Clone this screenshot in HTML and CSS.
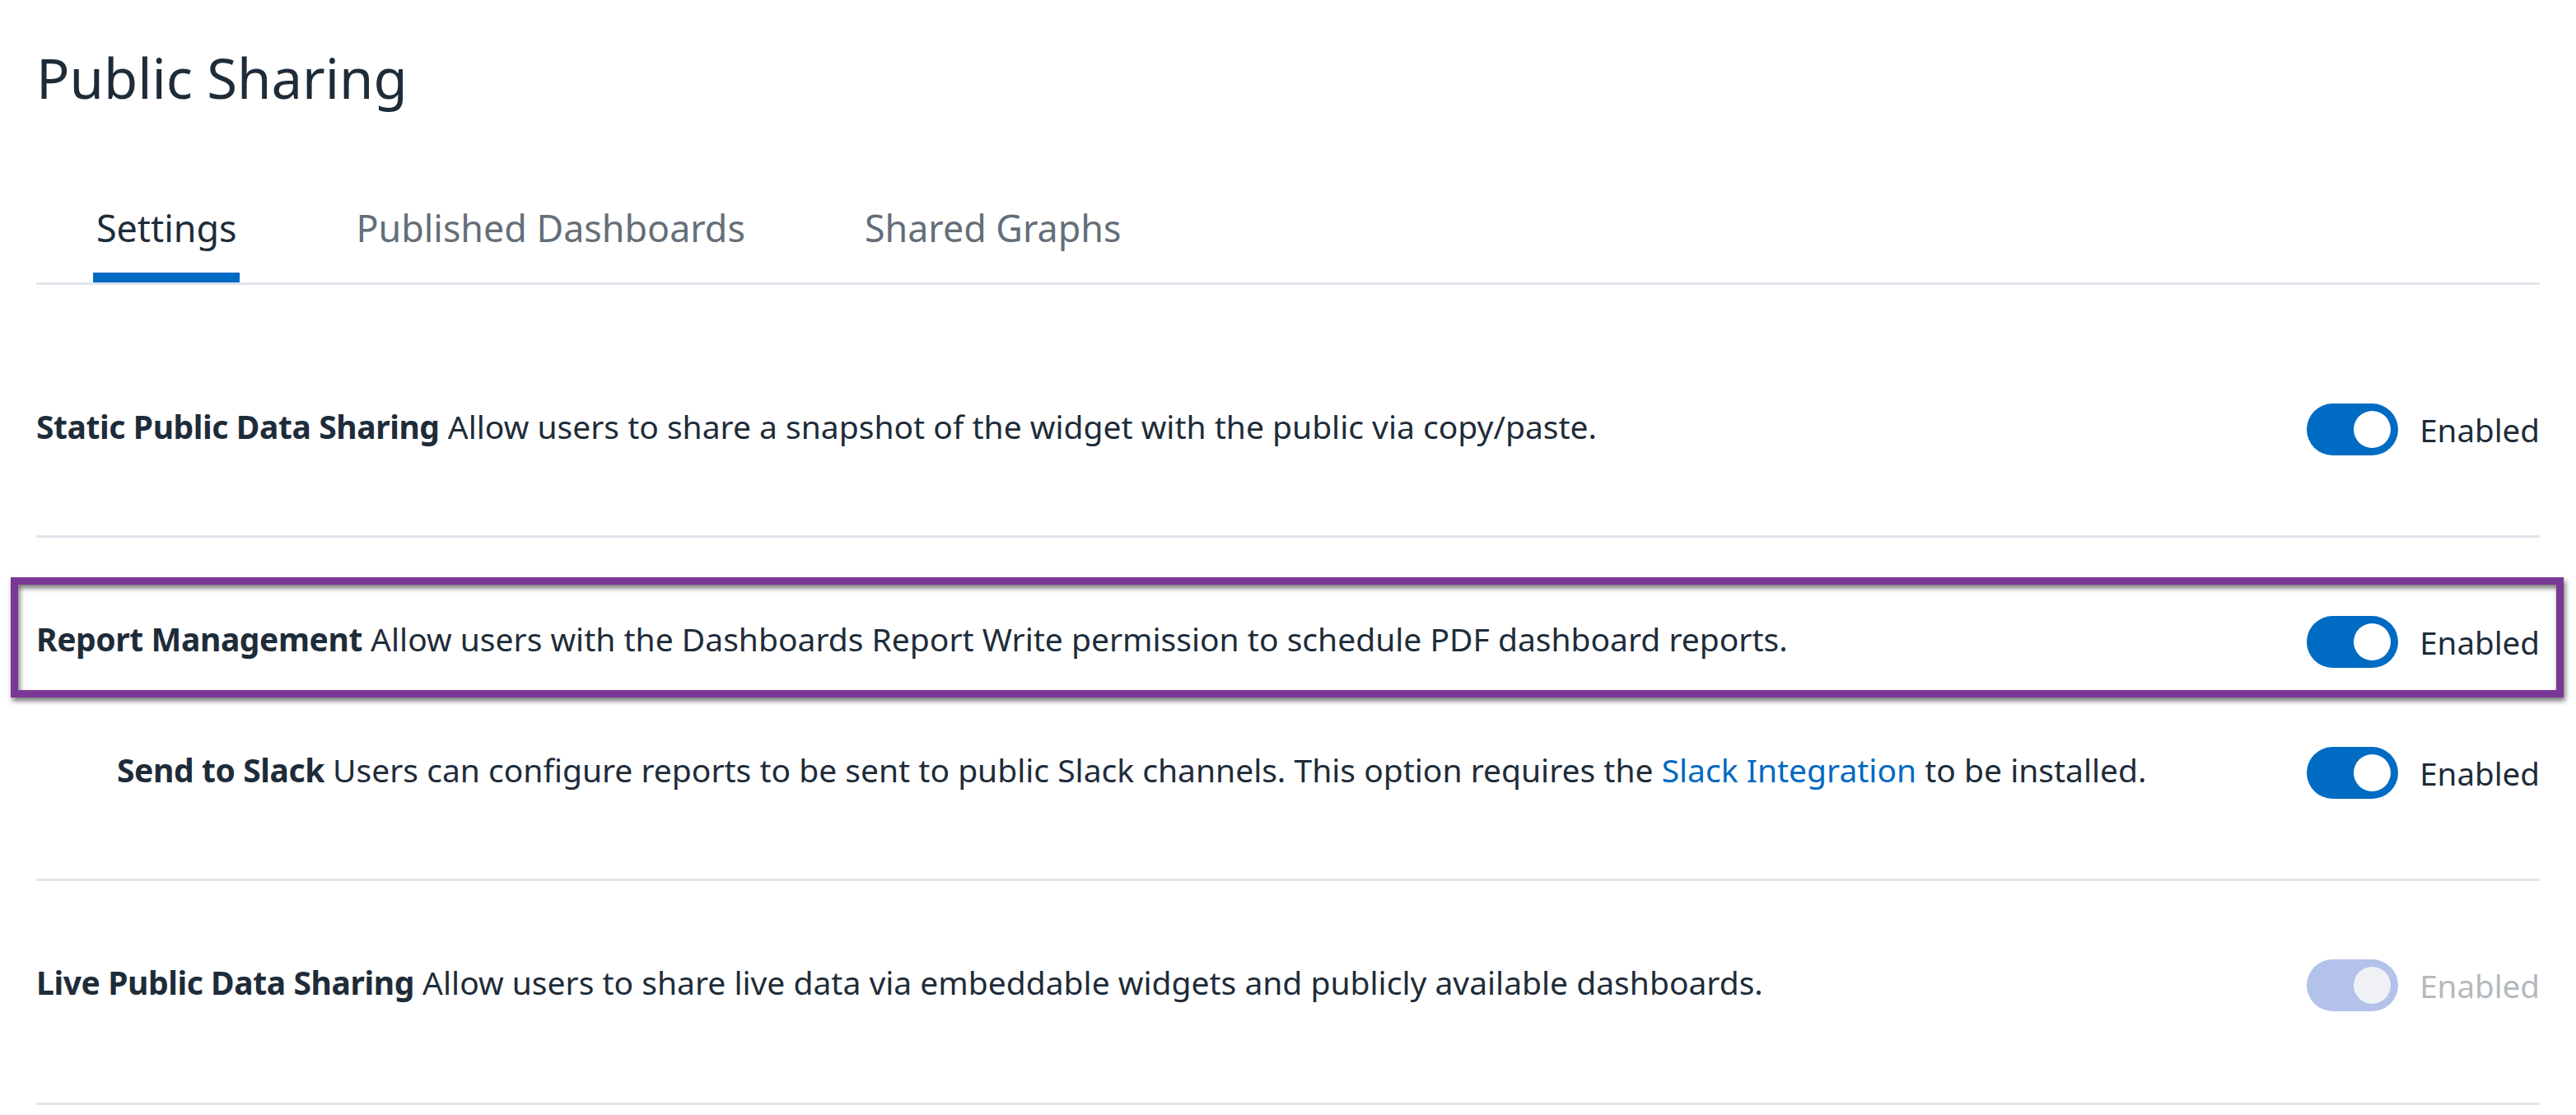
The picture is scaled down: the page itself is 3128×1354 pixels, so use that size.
FILE: index.html
```html
<!DOCTYPE html>
<html lang="en">
<head>
<meta charset="utf-8">
<title>Public Sharing</title>
<link rel="stylesheet" href="styles.css">
</head>
<body>
<main class="page">
  <h1 class="title">Public Sharing</h1>
  <nav class="tabs">
    <a class="tab tab-active">Settings</a>
    <a class="tab">Published Dashboards</a>
    <a class="tab">Shared Graphs</a>
  </nav>
  <div class="settings">
    <section class="section section-first">
      <div class="row">
        <p class="desc"><strong>Static Public Data Sharing</strong> Allow users to share a snapshot of the widget with the public via copy/paste.</p>
        <div class="control">
          <span class="toggle"><span class="knob"></span></span>
          <span class="state">Enabled</span>
        </div>
      </div>
    </section>
    <section class="section">
      <div class="row row-highlight">
        <p class="desc"><strong>Report Management</strong> Allow users with the Dashboards Report Write permission to schedule PDF dashboard reports.</p>
        <div class="control">
          <span class="toggle"><span class="knob"></span></span>
          <span class="state">Enabled</span>
        </div>
      </div>
      <div class="row row-sub">
        <p class="desc"><strong>Send to Slack</strong> Users can configure reports to be sent to public Slack channels. This option requires the <a class="link">Slack Integration</a> to be installed.</p>
        <div class="control">
          <span class="toggle"><span class="knob"></span></span>
          <span class="state">Enabled</span>
        </div>
      </div>
    </section>
    <section class="section section-last">
      <div class="row">
        <p class="desc"><strong>Live Public Data Sharing</strong> Allow users to share live data via embeddable widgets and publicly available dashboards.</p>
        <div class="control control-disabled">
          <span class="toggle"><span class="knob"></span></span>
          <span class="state">Enabled</span>
        </div>
      </div>
    </section>
  </div>
</main>
</body>
</html>
```
FILE: styles.css
```css
html, body {
  margin: 0;
  padding: 0;
  background: #ffffff;
}

body {
  font-family: "Noto Sans", "Open Sans", sans-serif;
  color: #1e2c39;
}

.page {
  padding: 50px 44px 0 44px;
}

.title {
  margin: 0;
  font-size: 67px;
  line-height: 88px;
  font-weight: 400;
  color: #1e2c39;
}

.tabs {
  display: flex;
  gap: 137px;
  margin-top: 108px;
  padding-left: 69px;
  border-bottom: 3px solid #e1e4ec;
}

.tab {
  display: block;
  padding: 0 4px 23px 4px;
  font-size: 44.8px;
  line-height: 62px;
  color: #646e78;
  border-bottom: 12px solid transparent;
}

.tab-active {
  color: #1e2c39;
  border-bottom-color: #006bc3;
}

.settings {
  margin-top: 47px;
}

.section {
  display: flex;
  flex-direction: column;
  gap: 96px;
  padding: 95px 0 97px 0;
  border-bottom: 3px solid #e1e4ec;
}

.section-first {
  padding-top: 97px;
}

.section-last {
  padding-bottom: 111px;
}

.row {
  display: flex;
  align-items: center;
  justify-content: space-between;
  min-height: 63px;
}

.row-sub {
  padding-left: 98px;
}

.row-highlight {
  position: relative;
}

.row-highlight::after {
  content: "";
  position: absolute;
  left: -31px;
  right: -29px;
  top: -47px;
  bottom: -36px;
  border: 9px solid #7a3896;
  filter: drop-shadow(2px 4px 3px rgba(0, 0, 0, 0.55));
  pointer-events: none;
}

.desc {
  margin: 0;
  padding-bottom: 8px;
  font-size: 39px;
  line-height: 52px;
}

.desc strong {
  font-weight: 700;
  letter-spacing: -0.4px;
}

.link {
  color: #0069c2;
  text-decoration: none;
}

.control {
  display: flex;
  align-items: center;
  gap: 26px;
}

.toggle {
  display: flex;
  justify-content: flex-end;
  align-items: center;
  box-sizing: border-box;
  width: 111px;
  height: 63px;
  padding: 0 9px;
  border-radius: 32px;
  background: #006bc3;
}

.knob {
  display: block;
  width: 45px;
  height: 45px;
  border-radius: 50%;
  background: #ffffff;
}

.state {
  font-size: 38.5px;
  line-height: 52px;
  color: #1e2c39;
}

.control-disabled .toggle {
  background: #b3c2ea;
}

.control-disabled .knob {
  background: #eff1f5;
}

.control-disabled .state {
  color: #b3b9bd;
}
```
